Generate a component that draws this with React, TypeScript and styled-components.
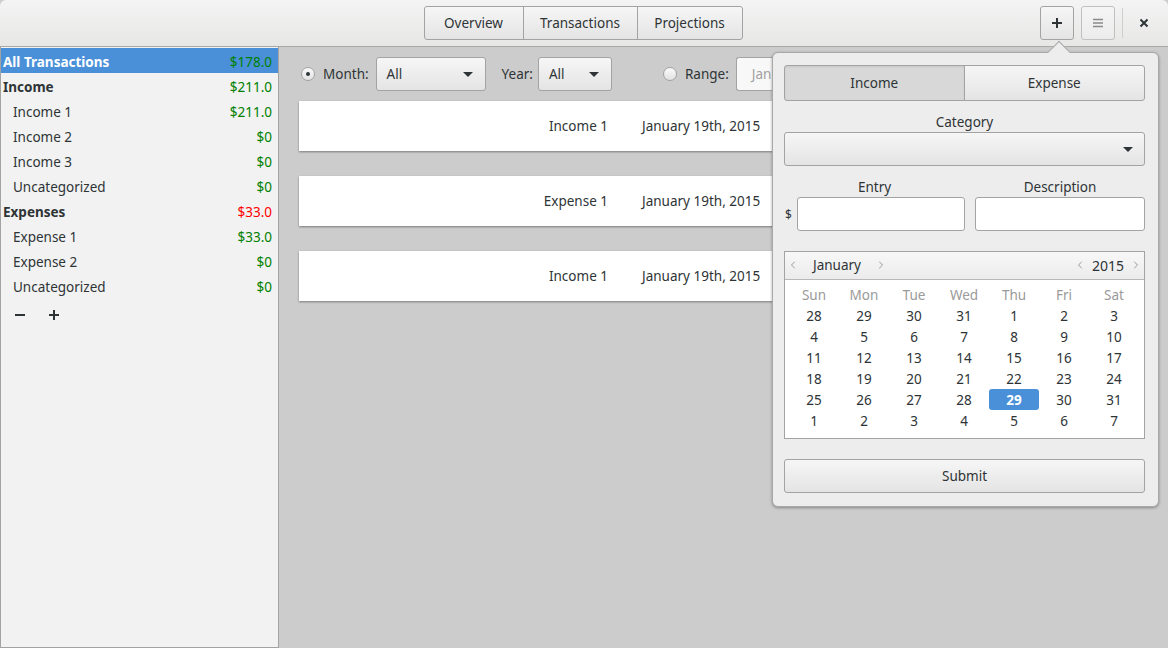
import React from 'react'
import styled, { createGlobalStyle, css } from 'styled-components'
import { ChevronLeft, ChevronRight } from 'lucide-react'

const GlobalStyle = createGlobalStyle`
  html, body {
    margin: 0;
    padding: 0;
    background: #cccccc;
  }
  * {
    box-sizing: border-box;
  }
`

const Window = styled.div`
  position: relative;
  width: 1168px;
  height: 648px;
  overflow: hidden;
  display: flex;
  flex-direction: column;
  font-family: "Noto Sans", "Open Sans", sans-serif;
  font-size: 13.5px;
  color: #2e3436;
  background: #cccccc;
`

const HeaderBar = styled.div`
  height: 47px;
  flex: none;
  display: grid;
  grid-template-columns: 1fr auto 1fr;
  align-items: center;
  padding: 0 6px;
  background: linear-gradient(#f4f4f4, #e7e7e6);
  border-bottom: 1px solid #a9a9a9;
  border-radius: 6px 6px 0 0;
`

const Switcher = styled.div`
  grid-column: 2;
  display: flex;
  height: 34px;
  margin-left: -2px;
`

const buttonFace = css`
  background: linear-gradient(#f6f6f6, #e4e4e4);
  border: 1px solid #a3a3a3;
  color: #2e3436;
  font-family: inherit;
  font-size: 13.5px;
`

const SwitchButton = styled.button<{ $w: number }>`
  ${buttonFace};
  width: ${(p) => p.$w}px;
  height: 34px;
  padding: 0;
  margin-left: -1px;
  &:first-child {
    margin-left: 0;
    border-radius: 3px 0 0 3px;
  }
  &:last-child {
    border-radius: 0 3px 3px 0;
  }
`

const HeaderEnd = styled.div`
  grid-column: 3;
  display: flex;
  align-items: center;
  justify-content: flex-end;
  gap: 7px;
  margin-top: -1px;
`

const IconButton = styled.button<{ $dim?: boolean }>`
  ${buttonFace};
  width: 34px;
  height: 34px;
  padding: 0;
  border-radius: 3px;
  display: flex;
  align-items: center;
  justify-content: center;
  border-color: ${(p) => (p.$dim ? '#c0c0c0' : '#a3a3a3')};
  background: ${(p) => (p.$dim ? 'linear-gradient(#f5f5f5, #ececec)' : 'linear-gradient(#f6f6f6, #e4e4e4)')};
`

const Separator = styled.div`
  width: 1px;
  height: 30px;
  background: #cfcfcf;
  margin-right: -4px;
`

const CloseButton = styled.div`
  width: 36px;
  height: 34px;
  display: flex;
  align-items: center;
  justify-content: center;
`

const Body = styled.div`
  flex: 1;
  display: flex;
  min-height: 0;
`

const Sidebar = styled.div`
  width: 279px;
  flex: none;
  background: #f2f2f2;
  border-left: 1px solid #a3a3a3;
  border-right: 1px solid #a3a3a3;
  border-bottom: 1px solid #a3a3a3;
  padding-top: 1px;
  display: flex;
  flex-direction: column;
`

const Row = styled.div<{ $selected?: boolean; $indent?: boolean; $bold?: boolean }>`
  height: 25px;
  display: flex;
  align-items: center;
  justify-content: space-between;
  padding: 2px 6px 0 ${(p) => (p.$indent ? 12 : 2)}px;
  font-weight: ${(p) => (p.$bold ? 700 : 400)};
  background: ${(p) => (p.$selected ? '#4a90d9' : 'transparent')};
  color: ${(p) => (p.$selected ? '#ffffff' : '#2e3436')};
`

const Amount = styled.span<{ $negative?: boolean }>`
  font-weight: 400;
  color: ${(p) => (p.$negative ? '#ff0000' : '#008000')};
`

const ListTools = styled.div`
  display: flex;
  padding: 2px 0 0 2px;
`

const FlatButton = styled.div`
  width: 34px;
  height: 30px;
  display: flex;
  align-items: center;
  justify-content: center;
`

const Main = styled.div`
  flex: 1;
  padding: 10px 20px 0 20px;
  display: flex;
  flex-direction: column;
`

const FilterRow = styled.div`
  height: 34px;
  display: flex;
  align-items: center;
  margin-bottom: 10px;
`

const Radio = styled.span<{ $checked?: boolean; $ml?: number }>`
  width: 14px;
  height: 14px;
  margin: 0 8px 0 ${(p) => p.$ml ?? 2}px;
  border-radius: 50%;
  border: 1px solid #a3a3a3;
  background: linear-gradient(#fafafa, #e2e2e2);
  display: flex;
  align-items: center;
  justify-content: center;
  &::after {
    content: '';
    width: 4px;
    height: 4px;
    border-radius: 50%;
    background: #2e3436;
    display: ${(p) => (p.$checked ? 'block' : 'none')};
  }
`

const FieldLabel = styled.span<{ $ml?: number; $mr?: number }>`
  margin-left: ${(p) => p.$ml ?? 0}px;
  margin-right: ${(p) => p.$mr ?? 7}px;
`

const Combo = styled.div<{ $w?: number }>`
  ${buttonFace};
  width: ${(p) => (p.$w ? `${p.$w}px` : 'auto')};
  height: 34px;
  border-radius: 3px;
  display: flex;
  align-items: center;
  justify-content: space-between;
  padding: 0 12px 0 10px;
`

const Caret = styled.span`
  width: 0;
  height: 0;
  border-left: 5px solid transparent;
  border-right: 5px solid transparent;
  border-top: 5px solid #2e3436;
`

const RangeEntry = styled.div`
  width: 36px;
  height: 34px;
  border: 1px solid #a3a3a3;
  border-right: none;
  border-radius: 3px 0 0 3px;
  background: #f8f8f8;
  color: #a0a0a0;
  display: flex;
  align-items: center;
  padding-left: 15px;
  overflow: hidden;
  white-space: nowrap;
`

const Card = styled.div`
  height: 50px;
  background: #ffffff;
  box-shadow: 0 1px 2px rgba(0, 0, 0, 0.4);
  margin-bottom: 25px;
  display: grid;
  grid-template-columns: 309px 1fr;
  column-gap: 34px;
  align-items: center;
`

const CardName = styled.span`
  text-align: right;
`

const Popover = styled.div`
  position: absolute;
  left: 772px;
  top: 52px;
  width: 387px;
  background: #ededed;
  border: 1px solid #a8a8a8;
  border-radius: 6px;
  box-shadow: 0 1px 3px rgba(0, 0, 0, 0.35);
  padding: 12px 13px 13px 11px;
  display: flex;
  flex-direction: column;
  &::before {
    content: '';
    position: absolute;
    top: -9px;
    left: 278px;
    width: 15px;
    height: 15px;
    background: #ededed;
    border-top: 1px solid #a8a8a8;
    border-left: 1px solid #a8a8a8;
    transform: rotate(45deg);
  }
`

const Toggle = styled.div`
  display: grid;
  grid-template-columns: 1fr 1fr;
  height: 36px;
`

const ToggleButton = styled.button<{ $active?: boolean }>`
  ${buttonFace};
  height: 36px;
  padding: 0;
  background: ${(p) => (p.$active ? '#d8d8d8' : 'linear-gradient(#f6f6f6, #e4e4e4)')};
  box-shadow: ${(p) => (p.$active ? 'inset 0 1px 2px rgba(0,0,0,0.08)' : 'none')};
  &:first-child {
    border-radius: 3px 0 0 3px;
  }
  &:last-child {
    border-radius: 0 3px 3px 0;
    margin-left: -1px;
  }
`

const CenterLabel = styled.div<{ $top?: number }>`
  text-align: center;
  line-height: 16px;
  margin: ${(p) => p.$top ?? 13}px 0 2px;
`

const WideCombo = styled(Combo)`
  padding-right: 11px;
  justify-content: flex-end;
`

const EntryGrid = styled.div`
  display: grid;
  grid-template-columns: 181px 1fr;
  column-gap: 10px;
  margin-bottom: 20px;
`

const EntryColumn = styled.div`
  display: flex;
  flex-direction: column;
`

const EntryLine = styled.div`
  display: flex;
  align-items: center;
  gap: 5px;
  font-size: 12px;
  padding-left: 1px;
`

const TextEntry = styled.div`
  flex: 1;
  height: 34px;
  background: #ffffff;
  border: 1px solid #a3a3a3;
  border-radius: 3px;
`

const Calendar = styled.div`
  border: 1px solid #a3a3a3;
  background: #ffffff;
  margin-bottom: 20px;
`

const CalHeader = styled.div`
  height: 28px;
  display: flex;
  align-items: center;
  justify-content: space-between;
  background: linear-gradient(#f8f8f8, #ebebeb);
  border-bottom: 1px solid #b8b8b8;
  padding: 0 2px 1px 2px;
`

const CalNav = styled.div`
  display: flex;
  align-items: center;
  color: #9a9a9a;
`

const CalTitle = styled.span<{ $w: number; $size?: number }>`
  width: ${(p) => p.$w}px;
  text-align: center;
  color: #2e3436;
  font-size: ${(p) => p.$size ?? 13.5}px;
`

const DayGrid = styled.div`
  display: grid;
  grid-template-columns: repeat(7, 50px);
  grid-auto-rows: 21px;
  padding: 4px 4px 7px;
`

const DayName = styled.div`
  display: flex;
  align-items: center;
  justify-content: center;
  color: #9a9a9a;
`

const Day = styled.div<{ $selected?: boolean }>`
  display: flex;
  align-items: center;
  justify-content: center;
  border-radius: 3px;
  background: ${(p) => (p.$selected ? '#4a90d9' : 'transparent')};
  color: ${(p) => (p.$selected ? '#ffffff' : '#2e3436')};
  font-weight: ${(p) => (p.$selected ? 700 : 400)};
`

const SubmitButton = styled.button`
  ${buttonFace};
  height: 34px;
  border-radius: 3px;
  padding: 0;
`

const categories = [
  { name: 'All Transactions', amount: '$178.0', selected: true, bold: true },
  { name: 'Income', amount: '$211.0', bold: true },
  { name: 'Income 1', amount: '$211.0', indent: true },
  { name: 'Income 2', amount: '$0', indent: true },
  { name: 'Income 3', amount: '$0', indent: true },
  { name: 'Uncategorized', amount: '$0', indent: true },
  { name: 'Expenses', amount: '$33.0', bold: true, negative: true },
  { name: 'Expense 1', amount: '$33.0', indent: true },
  { name: 'Expense 2', amount: '$0', indent: true },
  { name: 'Uncategorized', amount: '$0', indent: true },
]

const transactions = ['Income 1', 'Expense 1', 'Income 1']

const weekDays = ['Sun', 'Mon', 'Tue', 'Wed', 'Thu', 'Fri', 'Sat']

const days = [
  28, 29, 30, 31,
  ...Array.from({ length: 31 }, (_, i) => i + 1),
  1, 2, 3, 4, 5, 6, 7,
]

const Plus = () => (
  <svg width="12" height="12" viewBox="0 0 12 12">
    <path d="M6 1v10M1 6h10" stroke="#2e3436" strokeWidth="2" />
  </svg>
)

const Minus = () => (
  <svg width="12" height="12" viewBox="0 0 12 12">
    <path d="M1 6h10" stroke="#2e3436" strokeWidth="2" />
  </svg>
)

const App: React.FC = () => {
  return (
    <>
      <GlobalStyle />
      <Window>
        <HeaderBar>
          <Switcher>
            <SwitchButton $w={100}>Overview</SwitchButton>
            <SwitchButton $w={115}>Transactions</SwitchButton>
            <SwitchButton $w={106}>Projections</SwitchButton>
          </Switcher>
          <HeaderEnd>
            <IconButton>
              <Plus />
            </IconButton>
            <IconButton $dim>
              <svg width="12" height="10" viewBox="0 0 12 10">
                <path d="M1 1.5h10M1 5h10M1 8.5h10" stroke="#8a8a8a" strokeWidth="1.4" />
              </svg>
            </IconButton>
            <Separator />
            <CloseButton>
              <svg width="10" height="10" viewBox="0 0 10 10">
                <path d="M1.5 1.5l7 7M8.5 1.5l-7 7" stroke="#2e3436" strokeWidth="2" />
              </svg>
            </CloseButton>
          </HeaderEnd>
        </HeaderBar>
        <Body>
          <Sidebar>
            {categories.map((c, i) => (
              <Row key={i} $selected={c.selected} $indent={c.indent} $bold={c.bold}>
                <span>{c.name}</span>
                <Amount $negative={c.negative}>{c.amount}</Amount>
              </Row>
            ))}
            <ListTools>
              <FlatButton>
                <Minus />
              </FlatButton>
              <FlatButton>
                <Plus />
              </FlatButton>
            </ListTools>
          </Sidebar>
          <Main>
            <FilterRow>
              <Radio $checked />
              <FieldLabel>Month:</FieldLabel>
              <Combo $w={110}>
                <span>All</span>
                <Caret />
              </Combo>
              <FieldLabel $ml={16} $mr={5}>Year:</FieldLabel>
              <Combo $w={74}>
                <span>All</span>
                <Caret />
              </Combo>
              <Radio $ml={51} />
              <FieldLabel>Range:</FieldLabel>
              <RangeEntry>Jan</RangeEntry>
            </FilterRow>
            {transactions.map((t, i) => (
              <Card key={i}>
                <CardName>{t}</CardName>
                <span>January 19th, 2015</span>
              </Card>
            ))}
          </Main>
        </Body>
        <Popover>
          <Toggle>
            <ToggleButton $active>Income</ToggleButton>
            <ToggleButton>Expense</ToggleButton>
          </Toggle>
          <CenterLabel>Category</CenterLabel>
          <WideCombo>
            <Caret />
          </WideCombo>
          <EntryGrid>
            <EntryColumn>
              <CenterLabel>Entry</CenterLabel>
              <EntryLine>
                <span>$</span>
                <TextEntry />
              </EntryLine>
            </EntryColumn>
            <EntryColumn>
              <CenterLabel>Description</CenterLabel>
              <TextEntry />
            </EntryColumn>
          </EntryGrid>
          <Calendar>
            <CalHeader>
              <CalNav>
                <ChevronLeft size={12} />
                <CalTitle $w={76}>January</CalTitle>
                <ChevronRight size={12} />
              </CalNav>
              <CalNav>
                <ChevronLeft size={12} />
                <CalTitle $w={44} $size={14}>2015</CalTitle>
                <ChevronRight size={12} />
              </CalNav>
            </CalHeader>
            <DayGrid>
              {weekDays.map((d) => (
                <DayName key={d}>{d}</DayName>
              ))}
              {days.map((d, i) => (
                <Day key={i} $selected={i === 32}>
                  {d}
                </Day>
              ))}
            </DayGrid>
          </Calendar>
          <SubmitButton>Submit</SubmitButton>
        </Popover>
      </Window>
    </>
  )
}

export default App
